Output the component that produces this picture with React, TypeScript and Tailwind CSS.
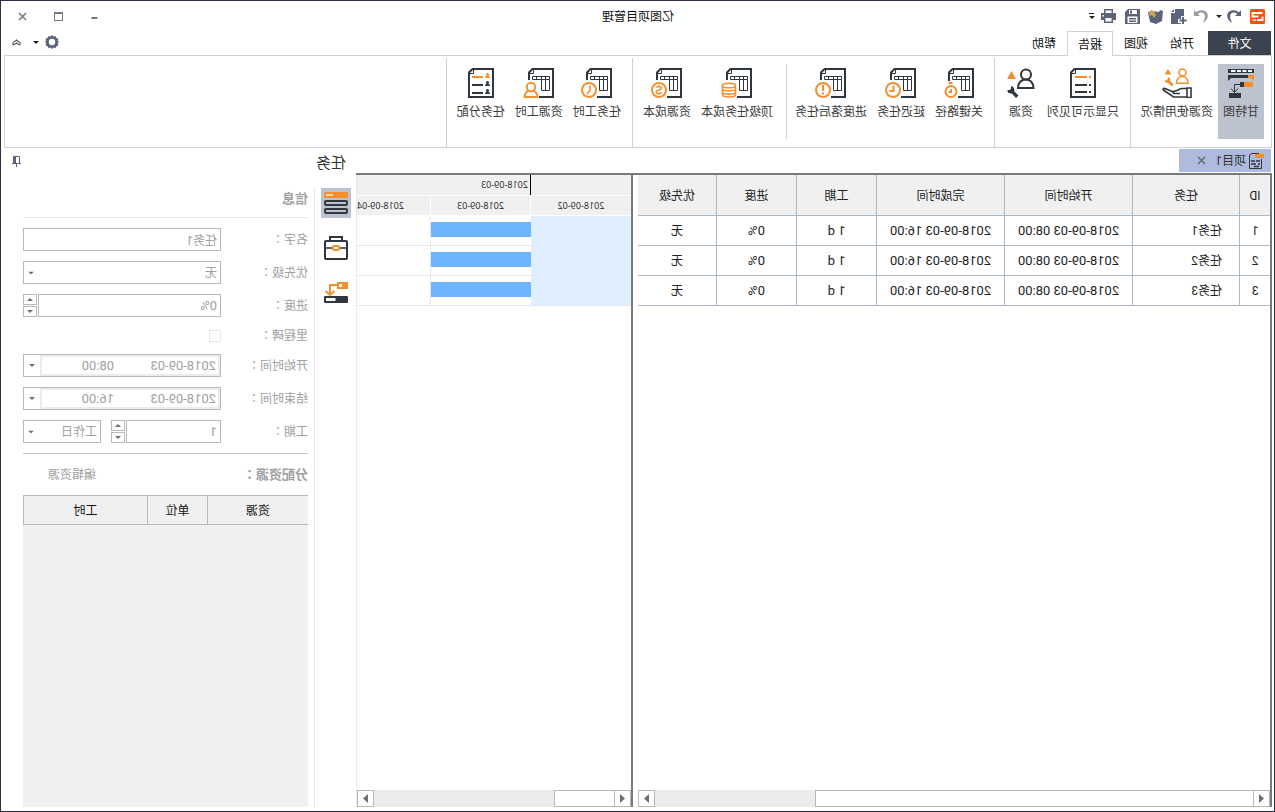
import { useState, type ReactNode } from 'react';

const DARK = '#2f363d';
const ORANGE = '#f58f2e';
const SLATE = '#5b6478';

type Badge = 'stopwatch' | 'clock' | 'alert' | 'coins' | 'dollar' | 'time' | 'person';

const BadgeShape = ({ type }: { type: Badge }) => {
  if (type === 'coins') {
    return (
      <g fill="none" stroke={ORANGE} strokeWidth="1.6">
        <ellipse cx="24" cy="17.5" rx="6.5" ry="2.3" />
        <path d="M17.5 17.5v3.200c0 3 13 3 13 0v-3.200M17.500 20.700v3.200c0 3 13 3 13 0v-3.200M17.500 23.900v2.700c0 3.200 13 3.200 13 0v-2.700" />
      </g>
    );
  }
  if (type === 'person') {
    return (
      <g fill="none" stroke={ORANGE} strokeWidth="2">
        <circle cx="24" cy="19" r="4.2" />
        <path d="M21.5 22.500c-2.500 1.500-4 4-4 6.500h13c0-2.500-1.500-5-4-6.500" />
      </g>
    );
  }
  if (type === 'stopwatch') {
    return (
      <g fill="none" stroke={ORANGE} strokeWidth="2">
        <circle cx="24" cy="23.5" r="5.500" />
        <path d="M22.500 15h4M24 21v3h2.500" />
      </g>
    );
  }
  return (
    <g fill="none" stroke={ORANGE} strokeWidth="2">
      <circle cx="24" cy="22" r="7" />
      {type === 'clock' && <path d="M23.500 17.500V23h4" />}
      {type === 'alert' && <path d="M24 17v6M24 24.500v2" />}
      {type === 'time' && <path d="M23 17.500v4.500l3 4" strokeWidth="1.600" />}
      {type === 'dollar' && (
        <path
          d="M26.700 19.800c-.5-2-5.200-1.800-5.200.3 0 2.300 5.300 1.500 5.300 3.800 0 2.200-5 2.300-5.500.2M24 17v1.500M24 25.500V27"
          strokeWidth="1.500"
        />
      )}
    </g>
  );
};

const SheetIcon = ({ badge }: { badge: Badge }) => (
  <svg width="32" height="30" viewBox="0 0 32 30" fill="none" stroke={DARK}>
    <path d={badge === 'stopwatch' ? 'M17 29H2V1h20.500L26 4.500V13' : 'M16 29H2V1h20.500L26 4.500V12'} strokeWidth="2" />
    <path d="M21.500 1.500v4h4" />
    <path d="M5.500 8.500h17v3h-17zM5.500 11.500v11h8v-14M9.500 8.500v14M18.500 8.500v3" />
    <BadgeShape type={badge} />
  </svg>
);

const ListIcon = ({ people = false }: { people?: boolean }) => (
  <svg width="28" height="30" viewBox="0 0 28 30" fill="none">
    <path d="M2 1h20.500L26 4.500V29H2z" stroke={DARK} strokeWidth="2" />
    <path d="M21.500 1.500v4h4" stroke={DARK} />
    {people ? (
      <>
        <path d="M12 9h11" stroke={ORANGE} strokeWidth="2" />
        <path d="M12 17h11M12 25h11" stroke={DARK} strokeWidth="2" />
        {[9, 17, 25].map((y, i) => (
          <g key={y} fill={i === 0 ? ORANGE : DARK}>
            <circle cx="7.500" cy={y - 2.5} r="1.600" />
            <path d={`M5 ${y + 1}c0-3 5-3 5 0z`} />
          </g>
        ))}
      </>
    ) : (
      <>
        <path d="M6 9h2M10 9h12" stroke={ORANGE} strokeWidth="2" />
        <path d="M6 17h2M10 17h12M6 24h2M10 24h12" stroke={DARK} strokeWidth="2" />
      </>
    )}
  </svg>
);

const GanttIcon = () => (
  <svg width="28" height="30" viewBox="0 0 28 30">
    <path d="M1 1h26v4H1z" fill={DARK} />
    <path d="M3 2h4v2H3zM8.500 2h4v2h-4zM14 2h4v2h-4zM19.500 2h4.500v2h-4.500z" fill="#fff" />
    <path d="M6 7h21v6l-3-3H6z" fill={DARK} />
    <path d="M1 7h6v3H4l-3 3z" fill={ORANGE} />
    <path d="M2 14h9v5H2z" fill={ORANGE} />
    <path d="M11 14h4v5h-4z" fill={DARK} />
    <path d="M15 16.500h5.500V24M17 20.500l3.500 4 3.500-4" fill="none" stroke={DARK} />
    <path d="M14 25h12v5H14z" fill={DARK} />
  </svg>
);

const Wrench = ({ color }: { color: string }) => (
  <path d="M8.500 0v2.700l1.300 1.300H12c.3 2-1.500 4-4.300 3.400L3.500 12 1 9.500l4.300-4.300C4.600 2.500 6.300.2 8.500 0z" fill={color} />
);

const UsageIcon = () => (
  <svg width="32" height="30" viewBox="0 0 32 30" fill="none">
    <circle cx="10.500" cy="4.500" r="3.500" stroke={ORANGE} strokeWidth="1.600" />
    <path d="M5 15.200c0-9 11.500-9 11.500 0z" stroke={ORANGE} strokeWidth="1.600" />
    <path d="M25 1l3.500 5.500h-7z" fill={ORANGE} />
    <g transform="translate(18.500 9) scale(.8)">
      <Wrench color={ORANGE} />
    </g>
    <path d="M2 20h4v9.500H2z" stroke={DARK} strokeWidth="1.600" />
    <path
      d="M6 20.500h5c3.500 0 3 2.500 7 2.500 2.500 0 2.500 2.500 0 2.500h-5M19.500 24l8.500-3.500c2-.6 2.500 1 1 2l-9.500 6.500H6"
      stroke={DARK}
      strokeWidth="1.700"
    />
  </svg>
);

const ResourceIcon = () => (
  <svg width="28" height="30" viewBox="0 0 28 30" fill="none">
    <circle cx="9" cy="6.500" r="5" stroke={DARK} strokeWidth="2" />
    <path d="M1.500 20c0-11.500 15.500-11.500 15.500 0z" stroke={DARK} strokeWidth="2" />
    <path d="M23.500 3l4.500 8h-9z" fill={ORANGE} />
    <g transform="translate(15.500 18)">
      <Wrench color={DARK} />
    </g>
  </svg>
);

const Caret = ({ up = false, color = '#6e6e6e' }: { up?: boolean; color?: string }) => (
  <svg width="6" height="3" viewBox="0 0 6 3" fill={color}>
    <path d={up ? 'M0 3h6L3 0z' : 'M0 0h6L3 3z'} />
  </svg>
);

const RibbonItem = ({ icon, label, active = false }: { icon: ReactNode; label: string; active?: boolean }) => (
  <button
    className={`flex h-[75px] min-w-[42px] shrink-0 flex-col items-center px-[5px] pt-1 text-xs whitespace-nowrap text-[#3c3c3c] ${
      active ? 'bg-[#bcc3cf]' : 'hover:bg-gray-100'
    }`}
  >
    {icon}
    <span className="mt-1.5 leading-4">{label}</span>
  </button>
);

const RibbonGroup = ({ children }: { children: ReactNode }) => (
  <div className="mt-0.5 flex shrink-0 border-r border-[#d0d0d0] pt-1.5 pr-[5px] pl-1.5">{children}</div>
);

const TitleBar = () => (
  <header className="relative flex h-[30px] items-center justify-between pr-3.5 pl-[7px]">
    <div className="flex items-center">
      <svg width="15" height="15" viewBox="0 0 15 15" fill="none" aria-label="logo">
        <rect width="15" height="15" rx="1.500" fill="#ff4d0d" />
        <path d="M2.500 4h10v3.500h-6M2.500 7.500V11H8" stroke="#fff" strokeWidth="1.800" />
        <path d="M9 11h3.500" stroke="#ffc9b0" strokeWidth="1.800" />
      </svg>
      <button aria-label="撤销" className="ml-[9px]">
        <svg width="15" height="15" viewBox="0 0 15 15">
          <path d="M0 1v6h6L3.800 5C7 2 12.500 3.500 10.500 10L9 14c7-4 6-12-.5-12.700C6 1 3.700 1.800 2.200 3.300z" fill={SLATE} />
        </svg>
      </button>
      <button aria-label="撤销列表" className="ml-1">
        <Caret color="#222" />
      </button>
      <button aria-label="恢复" className="ml-[7px]">
        <svg width="15" height="15" viewBox="0 0 15 15">
          <path d="M15 1v6H9l2.200-2C8 2 2.500 3.500 4.500 10L6 14C-1 10 0 2 6.500 1.300 9 1 11.300 1.800 12.800 3.300z" fill="#9a9a9a" />
        </svg>
      </button>
      <button aria-label="新建" className="ml-[7px]">
        <svg width="16" height="17" viewBox="0 0 16 17" fill={SLATE}>
          <path d="M3 1h9v4h4v11H3z" />
          <path d="M13 1l3 3h-3z" />
          <path d="M2.500 8H6v3h3v4H6v2H0V8z" fill="#fff" />
          <path d="M3 9h2v2.500h2.500v2H5V16H3v-2.500H.5v-2H3z" />
        </svg>
      </button>
      <button aria-label="打开" className="ml-2">
        <svg width="15" height="15" viewBox="0 0 15 15">
          <path d="M0 2l3-1 1 2 7-1 4 1-2 10-6 2-6-3z" fill={SLATE} />
          <path d="M7 6l2-4 3-1 2 3-1 3-2-1-2 3z" fill="#cda25a" />
        </svg>
      </button>
      <button aria-label="保存" className="ml-2">
        <svg width="15" height="16" viewBox="0 0 15 16" fill={SLATE}>
          <path d="M0 1h12l3 3v12H0z" />
          <path d="M3 2h8v4H3zM2.500 8.500h10V15h-10z" fill="#fff" />
          <path d="M8 2.500h2v3H8zM4 10h7v1.500H4zM4 12.500h7V14H4z" />
        </svg>
      </button>
      <button aria-label="打印" className="ml-[9px]">
        <svg width="15" height="14" viewBox="0 0 15 14" fill={SLATE}>
          <path d="M3 0h9v4h3v7h-3v3H3v-3H0V4h3z" />
          <path d="M4.500 1.500h6V4h-6zM4.500 9h6v3.500h-6zM12 6h1.500v1.500H12z" fill="#fff" />
        </svg>
      </button>
      <button aria-label="自定义工具栏" className="ml-1.5 flex flex-col items-center gap-0.5">
        <span className="h-px w-[5px] bg-[#222]" />
        <Caret color="#222" />
      </button>
    </div>
    <h1 className="absolute left-1/2 -translate-x-1/2 pt-px text-xs text-[#111]">亿图项目管理</h1>
    <div className="flex items-center gap-[27px]">
      <button aria-label="最小化">
        <svg width="9" height="9" viewBox="0 0 9 9">
          <path d="M1.500 5h6v2h-6z" fill="#777" />
        </svg>
      </button>
      <button aria-label="最大化" className="h-[9px] w-[9px] border border-t-2 border-[#777]" />
      <button aria-label="关闭">
        <svg width="9" height="9" viewBox="0 0 9 9" stroke="#777" strokeWidth="1.500">
          <path d="M1 1l7 7M8 1L1 8" />
        </svg>
      </button>
    </div>
  </header>
);

const MenuBar = () => (
  <nav className="relative z-10 flex h-6 items-stretch pl-px text-xs text-[#111]">
    <button className="mr-[3px] w-[63px] bg-[#3c4350] pt-0.5 text-white">文件</button>
    {['开始', '视图', '报告', '帮助'].map((name) => (
      <button
        key={name}
        className={`w-[46px] pt-0.5 ${name === '报告' ? '-mb-px border border-b-0 border-[#d0d0d0] bg-white' : ''}`}
      >
        {name}
      </button>
    ))}
    <div className="ml-auto flex items-center pr-2 pb-0.5">
      <button aria-label="设置">
        <svg width="14" height="14" viewBox="0 0 14 14">
          <path
            d="M7 0l1.500 1.500L10.500 1l1 2 2 .8-.7 2L14 7l-1.300 1.500.7 2-2 .8-.9 2-2-.7L7 14l-1.500-1.400-2 .6-.9-2-2-.7.7-2L0 7l1.300-1.200-.6-2 2-.8.8-2 2 .5z"
            fill={SLATE}
          />
          <circle cx="7" cy="7" r="3.200" fill="#fff" />
        </svg>
      </button>
      <button aria-label="设置列表" className="ml-1.5">
        <Caret color="#222" />
      </button>
      <button aria-label="折叠功能区" className="ml-3">
        <svg width="9" height="7" viewBox="0 0 10 7" fill="none" stroke="#555" strokeWidth="1.200">
          <path d="M1 4l4-3.300L9 4v2H7.500L5 4 2.500 6H1z" />
        </svg>
      </button>
    </div>
  </nav>
);

const Ribbon = () => (
  <section className="flex h-[93px] shrink-0 border border-[#d0d0d0] pl-px">
    <RibbonGroup>
      <RibbonItem icon={<GanttIcon />} label="甘特图" active />
      <RibbonItem icon={<UsageIcon />} label="资源使用情况" />
    </RibbonGroup>
    <RibbonGroup>
      <RibbonItem icon={<ListIcon />} label="只显示可见列" />
      <RibbonItem icon={<ResourceIcon />} label="资源" />
    </RibbonGroup>
    <RibbonGroup>
      <RibbonItem icon={<SheetIcon badge="stopwatch" />} label="关键路径" />
      <RibbonItem icon={<SheetIcon badge="clock" />} label="延迟任务" />
      <RibbonItem icon={<SheetIcon badge="alert" />} label="进度落后任务" />
      <div className="mr-2 ml-[3px] h-[75px] w-px bg-[#d0d0d0]" />
      <RibbonItem icon={<SheetIcon badge="coins" />} label="顶级任务成本" />
      <RibbonItem icon={<SheetIcon badge="dollar" />} label="资源成本" />
    </RibbonGroup>
    <RibbonGroup>
      <RibbonItem icon={<SheetIcon badge="time" />} label="任务工时" />
      <RibbonItem icon={<SheetIcon badge="person" />} label="资源工时" />
      <RibbonItem icon={<ListIcon people />} label="任务分配" />
    </RibbonGroup>
  </section>
);

const ScrollArrow = ({ right = false }: { right?: boolean }) => (
  <button
    aria-label={right ? '向右滚动' : '向左滚动'}
    className="flex w-[17px] shrink-0 items-center justify-center border border-[#b8b8b8] bg-white"
  >
    <svg width="5" height="9" viewBox="0 0 5 9" fill="#6e6e6e">
      <path d={right ? 'M0 0v9l5-4.500z' : 'M5 0v9L0 4.500z'} />
    </svg>
  </button>
);

const ScrollBar = ({ thumb }: { thumb: ReactNode }) => (
  <div className="mt-auto flex h-[17px] shrink-0 bg-[#ececec]">
    <ScrollArrow />
    {thumb}
    <div className="flex-1" />
    <ScrollArrow right />
  </div>
);

const columns = [
  { title: 'ID', width: 'w-[31px]' },
  { title: '任务', width: 'w-[107px]' },
  { title: '开始时间', width: 'w-[128px]' },
  { title: '完成时间', width: 'w-[128px]' },
  { title: '工期', width: 'w-[80px]' },
  { title: '进度', width: 'w-[80px]' },
  { title: '优先级', width: 'w-[78px]' },
];

const tasks = [1, 2, 3].map((id) => ({
  id,
  name: `任务${id}`,
  start: '2018-09-03 08:00',
  end: '2018-09-03 16:00',
  duration: '1 d',
  progress: '0%',
  priority: '无',
}));

const TaskTable = () => (
  <div className="flex w-[634px] shrink-0 flex-col border-l-2 border-[#7a7a7a]">
    <table className="w-full table-fixed border-separate border-spacing-0 text-xs text-[#222]">
      <thead>
        <tr className="h-[41px] bg-[#f0f0f0]">
          {columns.map((col) => (
            <th
              key={col.title}
              className={`${col.width} border-r border-b border-[#acb8c4] p-0 pt-0.5 font-normal last:border-r-0`}
            >
              {col.title}
            </th>
          ))}
        </tr>
      </thead>
      <tbody className="text-center [&_td]:border-r [&_td]:border-b [&_td]:border-[#acb8c4] [&_td]:p-0 [&_td:last-child]:border-r-0">
        {tasks.map((task) => (
          <tr key={task.id} className="h-[30px]">
            <td>{task.id}</td>
            <td className="text-left">
              <span className="pl-[17px]">{task.name}</span>
            </td>
            <td className="text-[13px]">{task.start}</td>
            <td className="text-[13px]">{task.end}</td>
            <td className="text-[13px]">{task.duration}</td>
            <td className="text-[13px]">{task.progress}</td>
            <td>{task.priority}</td>
          </tr>
        ))}
      </tbody>
    </table>
    <ScrollBar thumb={<div className="w-[438px] border border-l-0 border-[#b8b8b8] bg-white" />} />
  </div>
);

const GanttChart = () => (
  <div className="flex min-w-0 flex-1 flex-col border-r border-l-2 border-r-[#e6e9ed] border-l-[#7a7a7a]">
    <div className="overflow-hidden">
      <div className="flex h-5 bg-[#f0f0f0] text-[9px] text-[#222]">
        <div className="w-[100px] shrink-0" />
        <div className="flex items-center border-l border-black pl-0.5 font-['Open_Sans']">2018-09-03</div>
      </div>
      <div className="flex h-[21px] border-y border-white bg-[#f0f0f0] font-['Open_Sans'] text-[9px] text-[#222]">
        {['2018-09-02', '2018-09-03', '2018-09-04'].map((day) => (
          <div
            key={day}
            className="flex w-[100px] shrink-0 items-center justify-center border-l border-white first:border-l-0"
          >
            {day}
          </div>
        ))}
      </div>
      {tasks.map((task) => (
        <div key={task.id} className="flex h-[30px] border-b border-[#e3e8ec]">
          <div className="w-[100px] shrink-0 bg-[#e0efff]" />
          <div className="w-[100px] shrink-0 pt-1.5">
            <div className="h-[15px] bg-[#6eb5ff]" />
          </div>
          <div className="flex-1 border-l border-[#e3e8ec]" />
        </div>
      ))}
    </div>
    <ScrollBar thumb={<div className="w-[60px] border border-l-0 border-[#b8b8b8] bg-white" />} />
  </div>
);

const DocTab = () => (
  <div className="flex h-[25px] shrink-0 pt-px pb-px pl-px">
    <div className="flex w-[92px] items-center bg-[#aebbdf] pl-[7px] text-xs text-[#333]">
      <svg width="16" height="16" viewBox="0 0 16 16" fill="none">
        <path d="M2.500 6v9.500h12V2L12 .5H5" stroke={DARK} />
        <path d="M0 1h9v4H0z" fill={ORANGE} />
        <path d="M4 8h4M9 8h4M4 11h2M8 11h5M5 13.500h5" stroke={DARK} strokeWidth="1.500" />
      </svg>
      <span className="ml-0.5">项目1</span>
      <button aria-label="关闭项目" className="ml-auto pr-[18px]">
        <svg width="9" height="9" viewBox="0 0 9 9" stroke="#666" strokeWidth="1.400">
          <path d="M1 1l7 7M8 1L1 8" />
        </svg>
      </button>
    </div>
  </div>
);

const Label = ({ htmlFor, children }: { htmlFor: string; children: ReactNode }) => (
  <label htmlFor={htmlFor} className="w-[87px] shrink-0">
    {children}
    <span className="font-['Noto_Sans_CJK_TC']">：</span>
  </label>
);

const Row = ({ children }: { children: ReactNode }) => <div className="flex h-[23px] items-center">{children}</div>;

const Spinner = () => (
  <div className="ml-px flex h-[23px] w-3.5 shrink-0 flex-col gap-px">
    <button aria-label="增加" className="flex flex-1 items-center justify-center border border-[#b8b8b8]">
      <Caret up />
    </button>
    <button aria-label="减少" className="flex flex-1 items-center justify-center border border-[#b8b8b8]">
      <Caret />
    </button>
  </div>
);

const fieldClass = 'h-[23px] min-w-0 flex-1 rounded-none border border-[#b8b8b8] bg-white px-[3px] outline-none';

const SelectBox = ({ id, label, options }: { id: string; label?: string; options: string[] }) => (
  <div className="relative flex min-w-0 flex-1">
    <select id={id} aria-label={label} className={`${fieldClass} appearance-none`}>
      {options.map((option) => (
        <option key={option}>{option}</option>
      ))}
    </select>
    <span className="pointer-events-none absolute top-1/2 right-[5px] flex -translate-y-1/2">
      <Caret />
    </span>
  </div>
);

const DateTimeBox = ({ id, date, time }: { id: string; date: string; time: string }) => (
  <div className="flex h-[23px] min-w-0 flex-1 border border-[#b8b8b8] text-[13px]">
    <div className="flex min-w-0 flex-1 border-2 border-[#ececec]">
      <input id={id} defaultValue={date} className="w-[104px] min-w-0 pl-0.5 outline-none" />
      <input aria-label="时间" defaultValue={time} className="w-0 min-w-0 flex-1 outline-none" />
    </div>
    <button aria-label="选择日期" className="flex w-4 items-center justify-center">
      <Caret />
    </button>
  </div>
);

const TaskForm = () => {
  const [name, setName] = useState<string>('任务1');

  return (
    <div className="flex min-w-0 flex-1 flex-col border-l border-[#e6e6e6] pr-[19px] pl-1.5 text-xs text-[#a0a0a0]">
      <h2 className="flex h-[30px] shrink-0 items-center border-b border-[#e6e6e6] pb-2 text-[13px] font-bold">信息</h2>
      <form className="flex flex-col gap-2.5 border-b border-[#c4c4c4] py-2.5">
        <Row>
          <Label htmlFor="name">名字</Label>
          <input id="name" value={name} onChange={(e) => setName(e.target.value)} className={fieldClass} />
        </Row>
        <Row>
          <Label htmlFor="priority">优先级</Label>
          <SelectBox id="priority" options={['无', '低', '中', '高']} />
        </Row>
        <Row>
          <Label htmlFor="progress">进度</Label>
          <input id="progress" defaultValue="0%" className={`${fieldClass} text-[13px]`} />
          <Spinner />
        </Row>
        <div className="flex h-[17px] items-center">
          <Label htmlFor="milestone">里程碑</Label>
          <input id="milestone" type="checkbox" className="h-3 w-3 appearance-none border border-[#e6e6e6]" />
        </div>
        <Row>
          <Label htmlFor="start">开始时间</Label>
          <DateTimeBox id="start" date="2018-09-03" time="08:00" />
        </Row>
        <Row>
          <Label htmlFor="end">结束时间</Label>
          <DateTimeBox id="end" date="2018-09-03" time="16:00" />
        </Row>
        <Row>
          <Label htmlFor="duration">工期</Label>
          <input id="duration" defaultValue="1" className={`${fieldClass} text-[13px]`} />
          <Spinner />
          <div className="ml-2.5 flex w-[78px]">
            <SelectBox id="unit" label="单位" options={['工作日', '小时']} />
          </div>
        </Row>
      </form>
      <div className="flex h-[41px] shrink-0 items-center justify-between">
        <h2 className="text-[13px] font-bold">
          分配资源<span className="font-['Noto_Sans_CJK_TC']">：</span>
        </h2>
        <button className="mr-[25px]">编辑资源</button>
      </div>
      <div className="min-h-0 flex-1 bg-[#f0f0f0]">
        <table className="w-full table-fixed border-separate border-spacing-0 border-y border-r border-[#b8b8b8] text-[#111]">
          <thead>
            <tr className="h-7">
              <th className="w-[101px] border-r border-[#b8b8b8] p-0 pt-0.5 font-normal">资源</th>
              <th className="w-[60px] border-r border-[#b8b8b8] p-0 pt-0.5 font-normal">单位</th>
              <th className="p-0 pt-0.5 font-normal">工时</th>
            </tr>
          </thead>
        </table>
      </div>
    </div>
  );
};

const PanelTools = () => (
  <div className="flex w-[41px] shrink-0 flex-col gap-[15px] pl-[5px]">
    <button aria-label="任务信息" className="flex h-[30px] w-[30px] items-center justify-center bg-[#bcc3cf]">
      <svg width="24" height="22" viewBox="0 0 24 22" fill="none">
        <rect width="24" height="6" rx="1" fill={ORANGE} />
        <path d="M15 2h7v2h-7z" fill="#f9d3a8" />
        <rect x="1" y="9" width="22" height="4" rx="1" stroke={DARK} strokeWidth="2" />
        <rect x="1" y="17" width="22" height="4" rx="1" stroke={DARK} strokeWidth="2" />
      </svg>
    </button>
    <button aria-label="资源" className="flex h-[30px] w-[30px] items-center justify-center">
      <svg width="24" height="24" viewBox="0 0 24 24" fill="none" strokeWidth="2">
        <path d="M6 4.500V1h12v3.500" stroke={DARK} />
        <rect x="1" y="5" width="22" height="18" rx="1" stroke={DARK} />
        <path d="M1 12h7M16 12h7" stroke={DARK} strokeWidth="1.500" />
        <rect x="9" y="10" width="6" height="4" rx="1" stroke={ORANGE} />
      </svg>
    </button>
    <button aria-label="链接" className="flex h-[30px] w-[30px] items-center justify-center">
      <svg width="24" height="22" viewBox="0 0 24 22" fill="none">
        <path d="M0 0h11v7H0z" fill={ORANGE} />
        <path d="M6 2h3v3H6z" fill="#fff" />
        <path d="M11 3h7v9M13.500 9l4.500 4 4.500-4" stroke={ORANGE} strokeWidth="2" />
        <rect y="14" width="24" height="7" rx="1" fill={DARK} />
        <path d="M12.500 16H22v3h-9.500z" fill="#fff" />
      </svg>
    </button>
  </div>
);

export default function App() {
  return (
    <div className="flex h-screen -scale-x-100 flex-col overflow-hidden border border-[#2b3042] bg-white pr-[3px] pb-1 pl-[2px] font-[Roboto,'Noto_Sans_CJK_SC',sans-serif]">
      <TitleBar />
      <MenuBar />
      <Ribbon />
      <main className="flex min-h-0 flex-1">
        <div className="flex min-w-0 flex-1 flex-col">
          <DocTab />
          <div className="flex min-h-0 flex-1 gap-[5px] border-t-2 border-[#7a7a7a]">
            <TaskTable />
            <GanttChart />
          </div>
        </div>
        <aside className="flex w-[352px] shrink-0 flex-col">
          <div className="flex h-10 shrink-0 items-start justify-between pt-1 pr-2 pl-2.5">
            <h2 className="text-[15px] leading-[22px] text-[#333]">任务</h2>
            <button aria-label="固定" className="pt-1">
              <svg width="9" height="11" viewBox="0 0 9 11" fill="none" stroke={SLATE}>
                <path d="M1.500 7V.5h6V7M0 7.500h9M4.500 8v3" />
                <path d="M5 1h2.500v6H5z" fill={SLATE} stroke="none" />
              </svg>
            </button>
          </div>
          <div className="flex min-h-0 flex-1">
            <PanelTools />
            <TaskForm />
          </div>
        </aside>
      </main>
    </div>
  );
}
